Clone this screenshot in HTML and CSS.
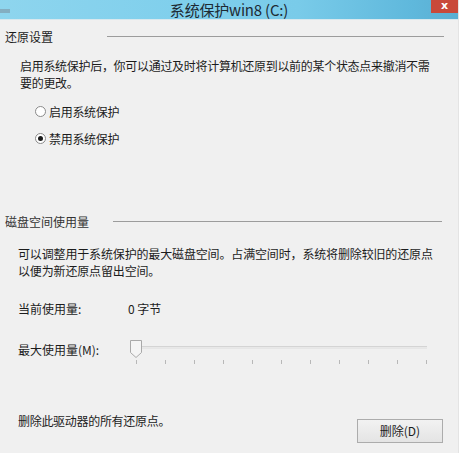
FILE: index.html
```html
<!DOCTYPE html>
<html lang="zh-CN">
<head>
<meta charset="utf-8">
<link rel="stylesheet" href="styles.css">
</head>
<body>
<div class="window">
  <div class="titlebar">
    <span class="app-icon"></span>
    <span class="title">系统保护win8 (C:)</span>
    <span class="close">x</span>
  </div>
  <div class="content">
    <div class="group-head head-1"><span>还原设置</span><i class="rule"></i></div>
    <p class="para para-1">启用系统保护后，你可以通过及时将计算机还原到以前的某个状态点来撤消不需<br>要的更改。</p>
    <label class="radio radio-1"><span class="dot"></span>启用系统保护</label>
    <label class="radio radio-2"><span class="dot checked"></span>禁用系统保护</label>

    <div class="group-head head-2"><span>磁盘空间使用量</span><i class="rule"></i></div>
    <p class="para para-2">可以调整用于系统保护的最大磁盘空间。占满空间时，系统将删除较旧的还原点<br>以便为新还原点留出空间。</p>
    <div class="usage"><span class="usage-label">当前使用量:</span><span>0 字节</span></div>
    <div class="max-row">
      <span class="max-label">最大使用量(M):</span>
      <div class="slider">
        <svg class="thumb" width="12" height="18" viewBox="0 0 12 18"><path d="M0.5 0.5 H11.5 V12.5 L6 17.5 L0.5 12.5 Z" fill="#f4f4f4" stroke="#a9a9a9"/></svg>
        <div class="track-wrap">
          <div class="track"></div>
          <div class="ticks"><i></i><i></i><i></i><i></i><i></i><i></i><i></i><i></i><i></i><i></i><i></i></div>
        </div>
      </div>
    </div>
    <div class="delete-row">
      <span>删除此驱动器的所有还原点。</span>
      <button class="btn">删除(D)</button>
    </div>
  </div>
</div>
</body>
</html>
```
FILE: styles.css
```css
* { box-sizing: border-box; }
html, body { margin: 0; padding: 0; }
body {
  width: 459px;
  height: 453px;
  background: #f0f0f0;
  font-family: "Noto Sans CJK SC", "Noto Sans", sans-serif;
  font-size: 12px;
  color: #1c1c1c;
  overflow: hidden;
}
.window {
  height: 453px;
  border-right: 1px solid #e4e4e4;
}
.titlebar {
  height: 20px;
  display: grid;
  grid-template-columns: 1fr auto 1fr;
  align-items: start;
  background: linear-gradient(to right, #8ed5ee 0%, #7fcfec 40%, #79cbe9 65%, #5fb8dc 90%, #5aaed2 100%);
  border-bottom: 1px solid #d8e8ee;
}
.app-icon {
  justify-self: start;
  width: 10px;
  height: 4px;
  margin-top: 9px;
  background: #7d95a4;
  opacity: 0.6;
}
.title {
  font-size: 15px;
  line-height: 19px;
  color: #1d2a33;
  letter-spacing: -0.2px;
}
.close {
  justify-self: end;
  width: 27px;
  height: 13px;
  background: #c9493a;
  color: #fff;
  font-family: "DejaVu Sans", sans-serif;
  font-weight: bold;
  font-size: 11px;
  line-height: 11px;
  text-align: center;
}
.content {
  display: flex;
  flex-direction: column;
  line-height: 17px;
}
.group-head {
  display: flex;
  align-items: center;
  padding-left: 5px;
}
.group-head .rule {
  flex: 1;
  height: 1px;
  background: #9c9c9c;
  margin-right: 14px;
}
.head-1 { margin-top: 8px; }
.head-1 .rule { margin-left: 54px; }
.head-2 { margin-top: 66px; color: #333; }
.head-2 .rule { margin-left: 24px; margin-right: 16px; }
.para {
  margin: 0;
  letter-spacing: -0.3px;
}
.para-1 { margin-top: 12px; padding-left: 20px; }
.para-2 { margin-top: 15px; padding-left: 18px; letter-spacing: -0.15px; }
.radio {
  display: flex;
  align-items: center;
  padding-left: 35px;
  gap: 3px;
  letter-spacing: -0.3px;
}
.radio-1 { margin-top: 12px; }
.radio-2 { margin-top: 10px; }
.dot {
  width: 11px;
  height: 11px;
  border-radius: 50%;
  border: 1px solid #8a8a8a;
  background: #fff;
  display: flex;
  align-items: center;
  justify-content: center;
}
.dot.checked::after {
  content: "";
  width: 5px;
  height: 5px;
  border-radius: 50%;
  background: #1a1a1a;
}
.usage {
  display: flex;
  margin-top: 21px;
  padding-left: 18px;
}
.usage-label { width: 110px; }
.max-row {
  display: flex;
  align-items: flex-start;
  margin-top: 24px;
  padding-left: 18px;
}
.max-label { width: 112px; }
.slider {
  display: flex;
  align-items: flex-start;
  margin-top: -1px;
}
.thumb { display: block; }
.track-wrap {
  width: 291px;
  margin-left: -6px;
}
.track {
  margin-top: 6px;
  margin-left: 6px;
  height: 3px;
  border-top: 1px solid #d4d4d4;
  border-bottom: 1px solid #e6e6e6;
  background: #e8e8e8;
}
.ticks {
  display: flex;
  justify-content: space-between;
  margin-top: 11px;
}
.ticks i {
  width: 1px;
  height: 4px;
  background: #b8b8b8;
}
.delete-row {
  display: flex;
  align-items: flex-start;
  justify-content: space-between;
  margin-top: 48px;
  padding-left: 18px;
  padding-right: 15px;
  letter-spacing: -0.3px;
}
.btn {
  margin-top: 7px;
  width: 86px;
  height: 24px;
  border: 1px solid #acacac;
  background: linear-gradient(#f2f2f2, #e4e4e4);
  font-family: "Noto Sans CJK SC", "Noto Sans", sans-serif;
  font-size: 12px;
  color: #1c1c1c;
  padding: 0;
  line-height: 20px;
}
```
